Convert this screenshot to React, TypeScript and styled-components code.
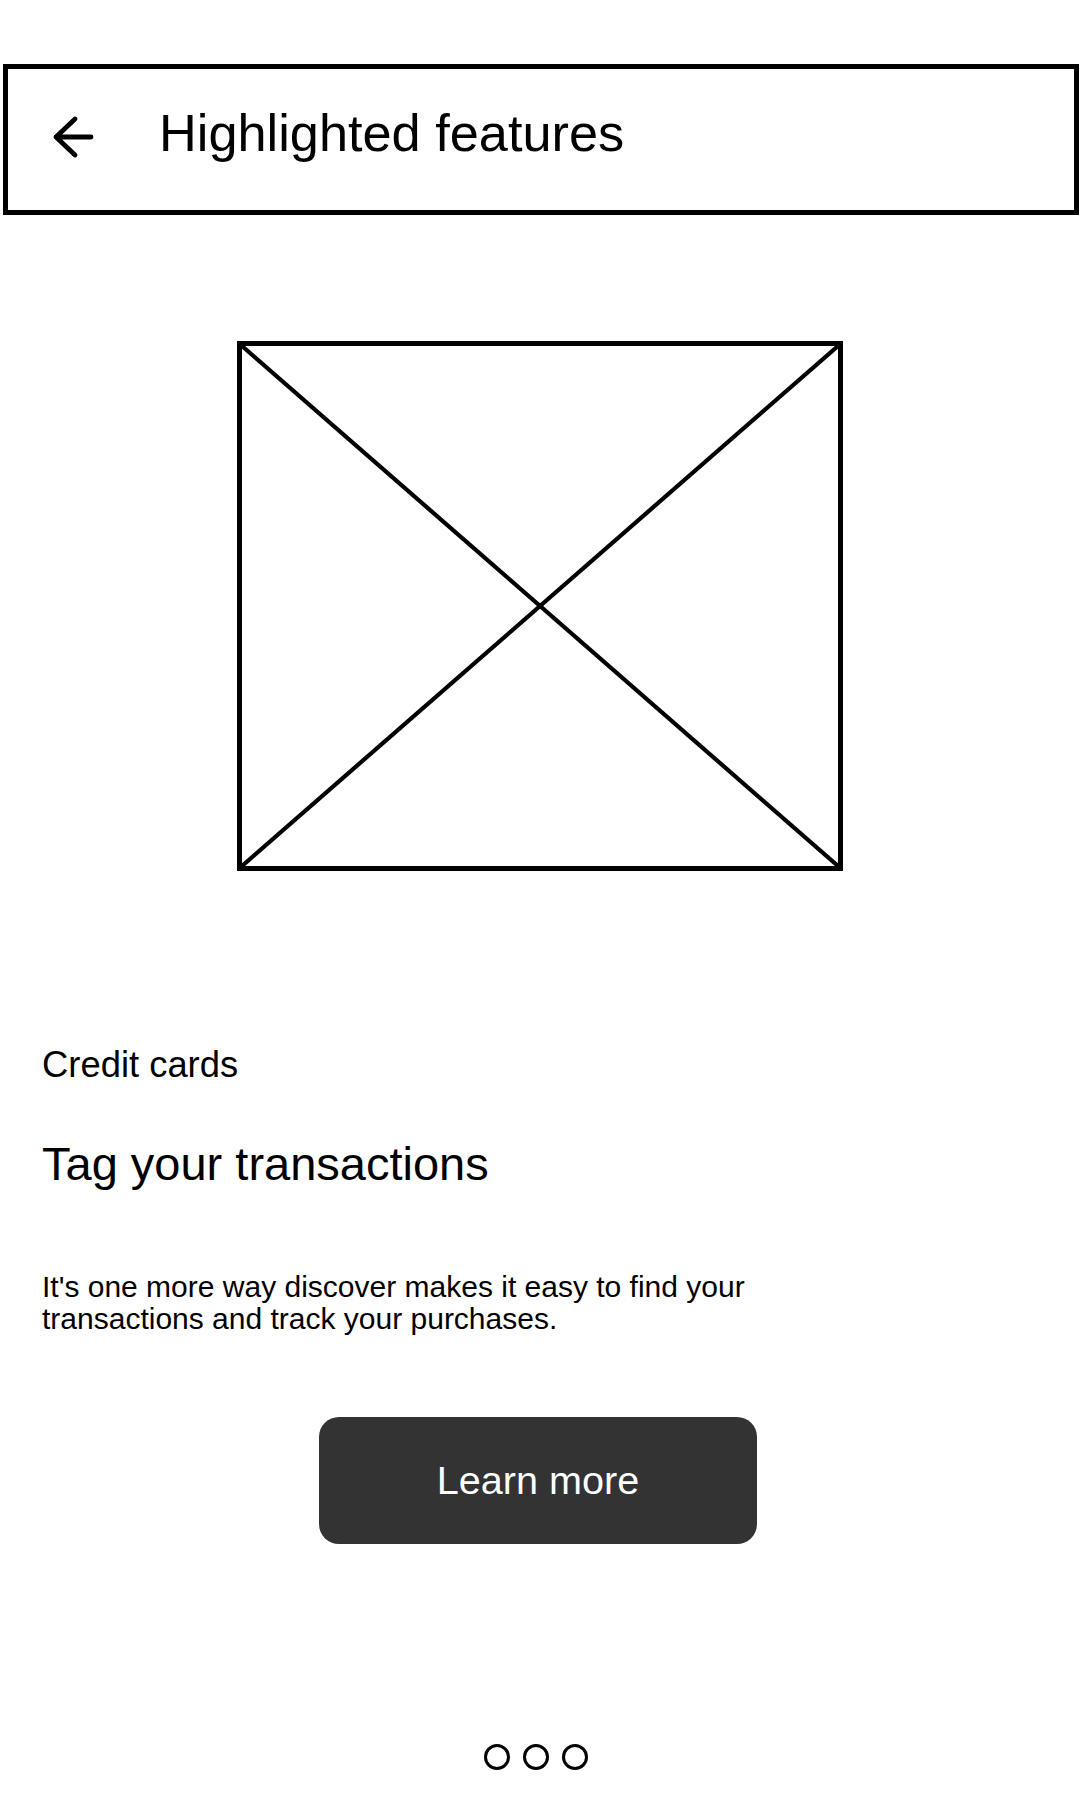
import React from "react";
import styled, { createGlobalStyle } from "styled-components";

const GlobalStyle = createGlobalStyle`
  html, body {
    margin: 0;
    padding: 0;
    background: #ffffff;
  }
  body {
    font-family: "Liberation Sans", Arial, sans-serif;
    color: #000000;
  }
  * { box-sizing: border-box; }
`;

const Page = styled.div`
  width: 1080px;
  min-height: 1800px;
  display: flex;
  flex-direction: column;
  background: #ffffff;
`;

const Header = styled.header`
  margin: 64px 0 0 3px;
  width: 1076px;
  height: 151px;
  border: 5px solid #000000;
  display: flex;
  align-items: flex-start;
  padding-left: 43px;
`;

const BackButton = styled.button`
  margin-top: 46px;
  width: 44px;
  height: 44px;
  padding: 0;
  border: none;
  background: transparent;
  display: flex;
  cursor: pointer;
`;

const Title = styled.h1`
  margin: 38px 0 0 64px;
  font-size: 52.3px;
  line-height: 52px;
  font-weight: 400;
  white-space: nowrap;
`;

const Placeholder = styled.div`
  margin: 126px auto 0;
  width: 606px;
  height: 530px;
  border: 5px solid #000000;
  display: flex;
`;

const Content = styled.section`
  display: flex;
  flex-direction: column;
  padding-left: 42px;
`;

const Eyebrow = styled.div`
  margin-top: 176px;
  font-size: 36.4px;
  line-height: 36px;
`;

const Heading = styled.h2`
  margin: 57px 0 0;
  font-size: 47px;
  line-height: 47px;
  font-weight: 400;
`;

const Body = styled.p`
  margin: 84px 0 0;
  max-width: 730px;
  font-size: 30px;
  line-height: 32px;
`;

const PrimaryButton = styled.button`
  margin: 82px 0 0 319px;
  width: 438px;
  height: 127px;
  border: none;
  border-radius: 20px;
  background: #333333;
  color: #ffffff;
  font-family: "Liberation Sans", Arial, sans-serif;
  font-size: 39.6px;
  display: flex;
  align-items: center;
  justify-content: center;
  cursor: pointer;
`;

const Dots = styled.div`
  margin: 200px 0 0 484px;
  display: flex;
  gap: 13px;
`;

const Dot = styled.span<{ $active?: boolean }>`
  width: 26px;
  height: 26px;
  border-radius: 50%;
  border: 3px solid #000000;
  background: ${(p) => (p.$active ? "#000000" : "transparent")};
`;

const ArrowIcon = () => (
  <svg width="44" height="44" viewBox="0 0 44 44" fill="none">
    <path
      d="M5 22H40M24 4L5 22L24 40"
      stroke="#000"
      strokeWidth="4.8"
      strokeLinecap="round"
      strokeLinejoin="round"
    />
  </svg>
);

const CrossLines = () => (
  <svg width="100%" height="100%" viewBox="0 0 596 520" preserveAspectRatio="none">
    <line x1="0" y1="0" x2="596" y2="520" stroke="#000" strokeWidth="4.2" />
    <line x1="596" y1="0" x2="0" y2="520" stroke="#000" strokeWidth="4.2" />
  </svg>
);

export default function App() {
  return (
    <>
      <GlobalStyle />
      <Page>
        <Header>
          <BackButton aria-label="Back">
            <ArrowIcon />
          </BackButton>
          <Title>Highlighted features</Title>
        </Header>
        <Placeholder>
          <CrossLines />
        </Placeholder>
        <Content>
          <Eyebrow>Credit cards</Eyebrow>
          <Heading>Tag your transactions</Heading>
          <Body>
            It's one more way discover makes it easy to find your transactions and track your purchases.
          </Body>
        </Content>
        <PrimaryButton>Learn more</PrimaryButton>
        <Dots>
          <Dot />
          <Dot />
          <Dot />
        </Dots>
      </Page>
    </>
  );
}
